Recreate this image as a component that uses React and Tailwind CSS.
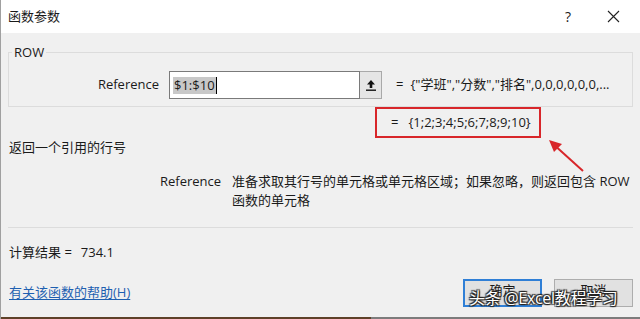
import React from "react";

const font = { fontFamily: '"Open Sans","Noto Sans CJK SC",sans-serif' };

const UploadIcon = () => (
  <svg width="12" height="14" viewBox="0 0 12 14" fill="none">
    <path d="M6 2 L10 6.5 H7.3 V10 H4.7 V6.5 H2 Z" fill="#111" />
    <rect x="1" y="11.5" width="10" height="1.4" fill="#111" />
  </svg>
);

export default function App() {
  return (
    <div
      className="relative w-[640px] h-[319px] overflow-hidden bg-[#f0f0f0] border-l border-[#a0a0a0] text-[13px] text-[#1a1a1a] flex flex-col"
      style={font}
    >
      {/* title bar */}
      <div className="h-[33px] bg-white flex items-center pl-[7px] pr-[20px] shrink-0">
        <span className="flex-1">函数参数</span>
        <span className="w-[14px] text-center mr-[32px] text-[14px]">?</span>
        <svg width="13" height="13" viewBox="0 0 13 13" stroke="#222" strokeWidth="1.1">
          <path d="M1 1 L12 12 M12 1 L1 12" />
        </svg>
      </div>

      <div className="flex flex-col px-[7px]">
        {/* ROW group */}
        <div className="relative mt-[19px] h-[55px] border border-[#dcdcdc] pt-[18px]">
          <span className="absolute -top-[10px] left-[3px] px-[2px] bg-[#f0f0f0] leading-[19px]">ROW</span>
          <div className="flex items-center h-[28px]">
            <span className="w-[150px] text-right">Reference</span>
            <div className="ml-[10px] w-[191px] h-[28px] bg-white border border-[#7a7a7a] flex items-center pl-[3px]">
              <span className="bg-[#c8c8c8] px-[1px] leading-[17px]">$1:$10</span>
              <span className="w-px h-[17px] bg-black" />
            </div>
            <div className="w-[22px] h-[28px] bg-[#e5e5e5] border border-l-0 border-[#a9a9a9] flex items-center justify-center">
              <UploadIcon />
            </div>
            <span className="ml-[14px]">=</span>
            <span className="ml-[7px] whitespace-nowrap">{'{"学班","分数","排名",0,0,0,0,0,0,...'}</span>
          </div>
        </div>

        {/* result line */}
        <div className="ml-[367px] w-[166px] h-[31px] border-2 border-[#d8262a] flex items-center pl-[14px]">
          <span>=</span>
          <span className="ml-[10px]">{"{1;2;3;4;5;6;7;8;9;10}"}</span>
        </div>

        <div className="leading-[19px] pl-[1px]">返回一个引用的行号</div>

        <div className="flex mt-[15px] leading-[19px]">
          <span className="ml-[152px] w-[72px]">Reference</span>
          <span className="w-[400px]">准备求取其行号的单元格或单元格区域；如果忽略，则返回包含 ROW 函数的单元格</span>
        </div>

        <div className="mt-[17px] h-px bg-[#dcdcdc]" />

        <div className="mt-[15px] leading-[19px] pl-[1px]">
          计算结果 =<span className="ml-[9px]">734.1</span>
        </div>

        <div className="mt-[17px] h-[28px] flex items-center">
          <a className="flex-1 pl-[1px] text-[#1e5fb0] underline underline-offset-2">有关该函数的帮助(H)</a>
          <button className="w-[79px] h-[28px] bg-[#e1e1e1] border-2 border-[#2f7fd6] leading-[18px] pb-[6px]">确定</button>
          <button className="ml-[12px] w-[79px] h-[28px] bg-[#e1e1e1] border border-[#adadad] leading-[18px] pb-[6px]">取消</button>
        </div>
      </div>

      <div className="mt-[10px] h-[3px] flex shrink-0">
        <div className="w-[370px] bg-[#5e4128]" />
        <div className="flex-1 bg-[#7c7c7c]" />
      </div>

      {/* annotation arrow */}
      <svg className="absolute left-[540px] top-[134px]" width="50" height="42" viewBox="0 0 50 42">
        <path d="M42 37 L11 9" stroke="#d8262a" strokeWidth="2" />
        <path d="M8 6 L21 10 L13 18 Z" fill="#d8262a" />
      </svg>

      {/* watermark */}
      <div
        className="absolute left-[468px] top-[287px] text-[16px] leading-[22px] text-white tracking-[-0.3px] whitespace-nowrap [text-shadow:0_0_1px_#222,1px_1px_1px_#222,-1px_-1px_1px_#222,1px_-1px_1px_#222,-1px_1px_1px_#222]"
      >
        头条 @Excel教程学习
      </div>
    </div>
  );
}
